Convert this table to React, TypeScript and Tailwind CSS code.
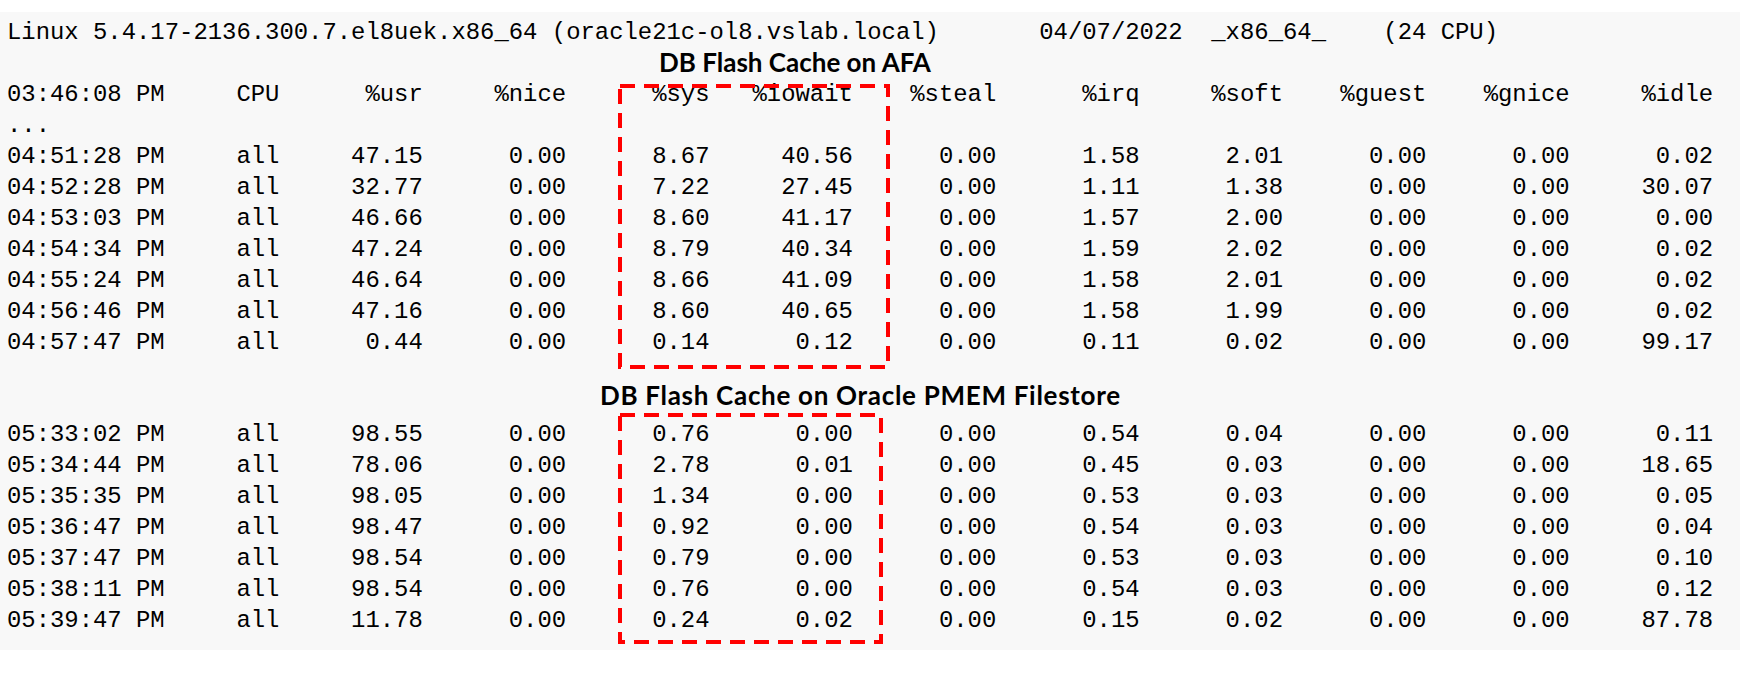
const header = ['CPU', '%usr', '%nice', '%sys', '%iowait', '%steal', '%irq', '%soft', '%guest', '%gnice', '%idle'];

const afaRows: [string, number[]][] = [
  ['04:51:28 PM', [47.15, 0.0, 8.67, 40.56, 0.0, 1.58, 2.01, 0.0, 0.0, 0.02]],
  ['04:52:28 PM', [32.77, 0.0, 7.22, 27.45, 0.0, 1.11, 1.38, 0.0, 0.0, 30.07]],
  ['04:53:03 PM', [46.66, 0.0, 8.6, 41.17, 0.0, 1.57, 2.0, 0.0, 0.0, 0.0]],
  ['04:54:34 PM', [47.24, 0.0, 8.79, 40.34, 0.0, 1.59, 2.02, 0.0, 0.0, 0.02]],
  ['04:55:24 PM', [46.64, 0.0, 8.66, 41.09, 0.0, 1.58, 2.01, 0.0, 0.0, 0.02]],
  ['04:56:46 PM', [47.16, 0.0, 8.6, 40.65, 0.0, 1.58, 1.99, 0.0, 0.0, 0.02]],
  ['04:57:47 PM', [0.44, 0.0, 0.14, 0.12, 0.0, 0.11, 0.02, 0.0, 0.0, 99.17]],
];

const pmemRows: [string, number[]][] = [
  ['05:33:02 PM', [98.55, 0.0, 0.76, 0.0, 0.0, 0.54, 0.04, 0.0, 0.0, 0.11]],
  ['05:34:44 PM', [78.06, 0.0, 2.78, 0.01, 0.0, 0.45, 0.03, 0.0, 0.0, 18.65]],
  ['05:35:35 PM', [98.05, 0.0, 1.34, 0.0, 0.0, 0.53, 0.03, 0.0, 0.0, 0.05]],
  ['05:36:47 PM', [98.47, 0.0, 0.92, 0.0, 0.0, 0.54, 0.03, 0.0, 0.0, 0.04]],
  ['05:37:47 PM', [98.54, 0.0, 0.79, 0.0, 0.0, 0.53, 0.03, 0.0, 0.0, 0.1]],
  ['05:38:11 PM', [98.54, 0.0, 0.76, 0.0, 0.0, 0.54, 0.03, 0.0, 0.0, 0.12]],
  ['05:39:47 PM', [11.78, 0.0, 0.24, 0.02, 0.0, 0.15, 0.02, 0.0, 0.0, 87.78]],
];

// sar layout: time (11) + cpu (8) + ten columns of width 10
const headerLine = '03:46:08 PM' + header[0].padStart(8) + header.slice(1).map((h) => h.padStart(10)).join('');
const rowLine = (time: string, vals: number[]) =>
  time + 'all'.padStart(8) + vals.map((v) => v.toFixed(2).padStart(10)).join('');

const Line = ({ text }: { text: string }) => <div className="h-[31px] leading-[31px]">{text}</div>;

const DashedBox = ({ className }: { className: string }) => (
  <svg className={`absolute ${className}`} preserveAspectRatio="none">
    <rect
      x="2"
      y="2"
      width="calc(100% - 4px)"
      height="calc(100% - 4px)"
      fill="none"
      stroke="#ff0000"
      strokeWidth="4"
      strokeDasharray="15 9"
    />
  </svg>
);

export default function App() {
  return (
    <div className="w-[1752px] h-[678px] bg-white pt-[12px]">
      <div
        className="relative w-[1740px] h-[638px] bg-[#f8f8f8] pl-[7px] pt-[5px] text-[23.9px] text-black whitespace-pre"
        style={{ fontFamily: '"Liberation Mono", monospace' }}
      >
        <Line text="Linux 5.4.17-2136.300.7.el8uek.x86_64 (oracle21c-ol8.vslab.local)       04/07/2022  _x86_64_    (24 CPU)" />
        <div
          className="h-[31px] leading-[28px] pl-[652px] font-bold text-[26px]"
          style={{ fontFamily: 'Lato, sans-serif' }}
        >
          DB Flash Cache on AFA
        </div>
        <Line text={headerLine} />
        <Line text="..." />
        {afaRows.map(([t, v]) => (
          <Line key={t} text={rowLine(t, v)} />
        ))}
        <div
          className="h-[61px] pt-[22px] leading-[31px] pl-[593px] font-bold text-[26px] tracking-[0.7px]"
          style={{ fontFamily: 'Lato, sans-serif' }}
        >
          DB Flash Cache on Oracle PMEM Filestore
        </div>
        {pmemRows.map(([t, v]) => (
          <Line key={t} text={rowLine(t, v)} />
        ))}
        <DashedBox className="left-[618px] top-[72px] w-[272px] h-[285px]" />
        <DashedBox className="left-[618px] top-[401px] w-[265px] h-[231px]" />
      </div>
    </div>
  );
}
